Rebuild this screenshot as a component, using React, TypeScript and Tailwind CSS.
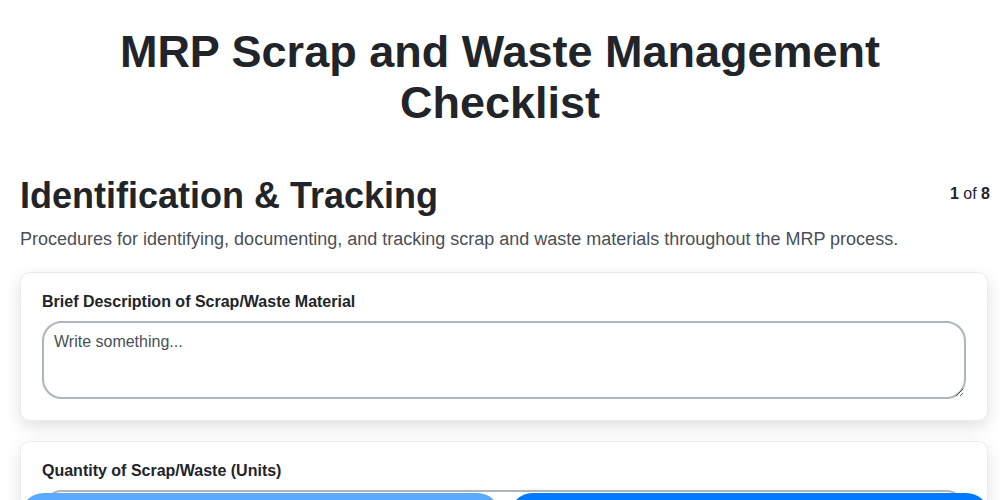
import * as React from "react";

const fields = [
  { label: "Brief Description of Scrap/Waste Material", kind: "textarea" },
  { label: "Quantity of Scrap/Waste (Units)", kind: "input" },
  { label: "Date of Identification", kind: "input" },
] as const;

function FieldCard({ label, kind }: { label: string; kind: "textarea" | "input" }) {
  return (
    <div className="mr-[2px] rounded-[10px] border border-[#e9ecef] bg-white px-[21px] pt-[19px] pb-[21px] shadow-[0_6px_16px_rgba(0,0,0,0.12)]">
      <label className="mb-[10px] block text-[16px] font-bold leading-[19px] text-[#212529]">
        {label}
      </label>
      {kind === "textarea" ? (
        <textarea
          placeholder="Write something..."
          className="block h-[78px] w-full resize-y rounded-[20px] border-2 border-[#adb5bd] bg-white px-[10px] py-[8px] text-[16px] leading-[22px] text-[#212529] outline-none placeholder:text-[#495057]"
        />
      ) : (
        <input
          type="text"
          className="block h-[44px] w-full rounded-[20px] border-2 border-[#adb5bd] bg-white px-[10px] text-[16px] text-[#212529] outline-none"
        />
      )}
    </div>
  );
}

export default function App() {
  return (
    <div className="min-h-screen bg-white font-['Liberation_Sans',Arial,sans-serif] text-[#212529]">
      <h1 className="px-[20px] pt-[26px] text-center text-[45px] font-bold leading-[51px]">
        MRP Scrap and Waste Management
        <br />
        Checklist
      </h1>

      <div className="pl-[20px] pr-[10px] pt-[45px] pb-[120px]">
        <div className="flex items-start justify-between">
          <h2 className="text-[36px] font-bold leading-[46px]">Identification &amp; Tracking</h2>
          <div className="pt-[11px] text-[16px] leading-[20px]">
            <span className="font-bold">1</span> of <span className="font-bold">8</span>
          </div>
        </div>
        <p className="mt-[8px] text-[18px] leading-[24px] text-[#495057]">
          Procedures for identifying, documenting, and tracking scrap and waste materials throughout the MRP process.
        </p>

        <div className="mt-[21px] flex flex-col gap-[20px]">
          {fields.map((f) => (
            <FieldCard key={f.label} label={f.label} kind={f.kind} />
          ))}
        </div>
      </div>

      {/* nav bar pinned over the bottom of the page */}
      <div className="fixed left-[20px] right-[10px] top-[493px] flex gap-[8px]">
        <button className="h-[48px] flex-1 rounded-full bg-[#5aabff] pt-[40px] text-[16px] font-bold text-white">
          Previous
        </button>
        <button className="h-[48px] flex-1 rounded-full bg-[#007bff] pt-[40px] text-[16px] font-bold text-white">
          Next
        </button>
      </div>
    </div>
  );
}
